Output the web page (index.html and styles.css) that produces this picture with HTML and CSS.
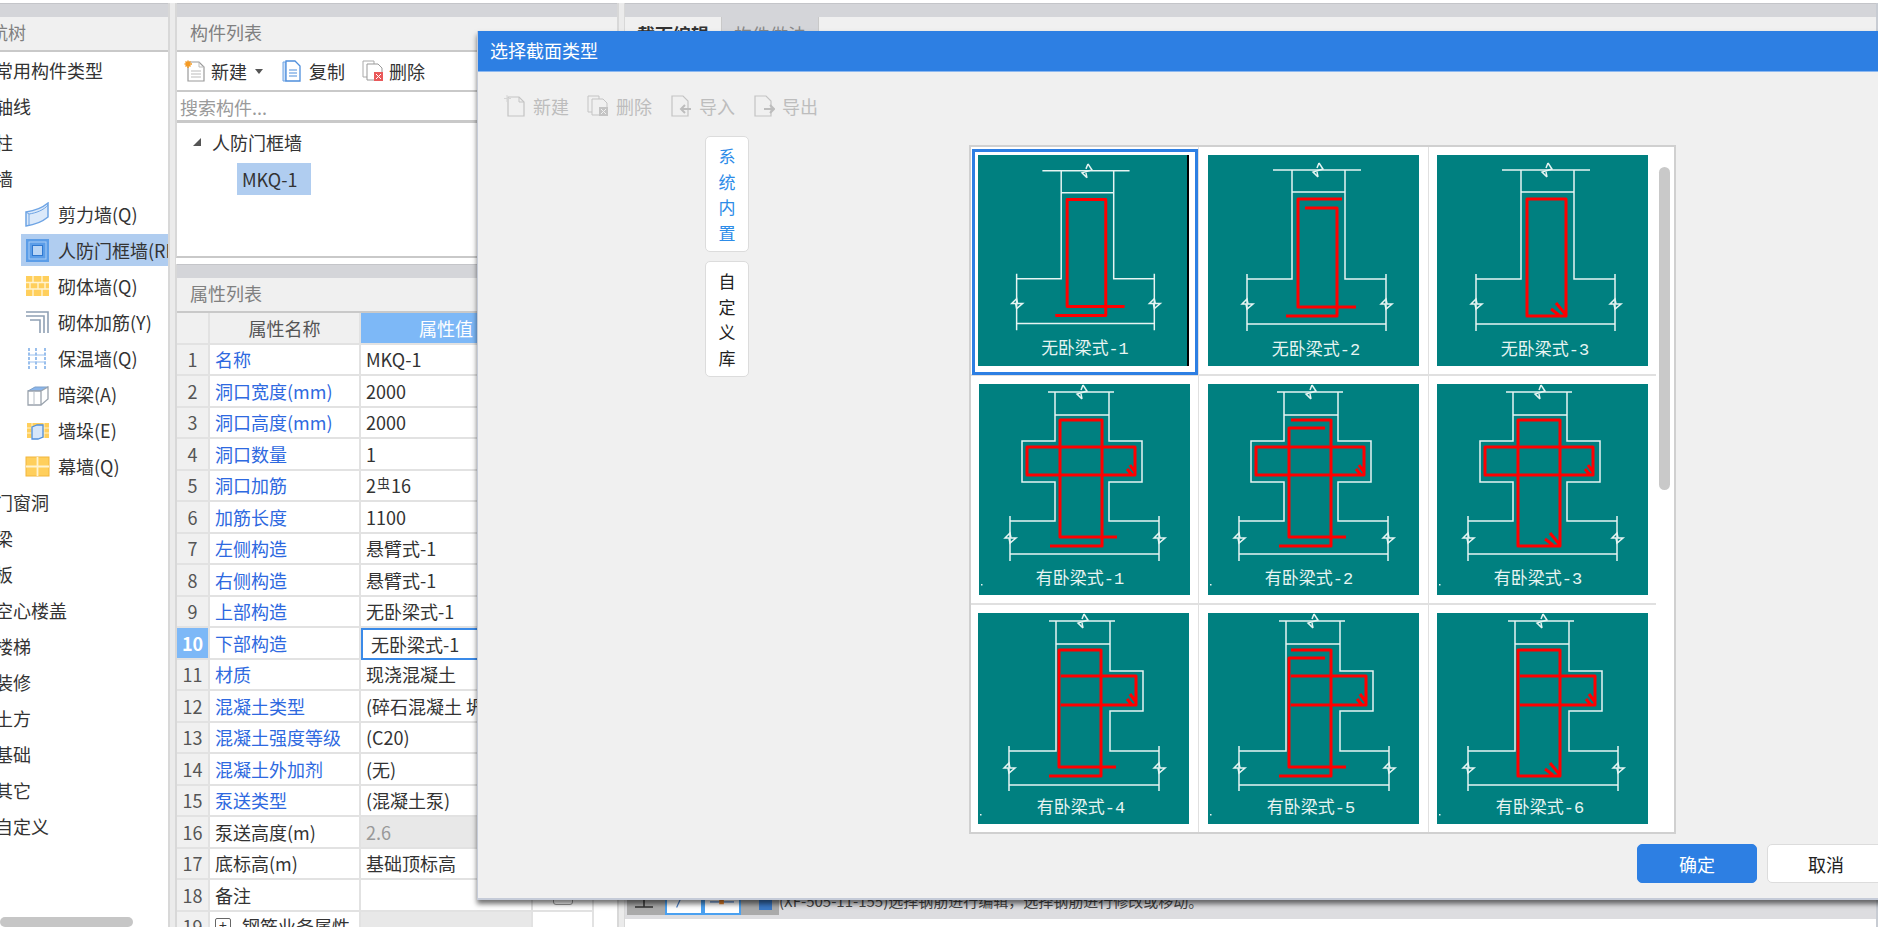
FILE: index.html
```html
<!DOCTYPE html>
<html lang="zh-CN">
<head>
<meta charset="utf-8">
<title>选择截面类型</title>
<link rel="stylesheet" href="styles.css">
</head>
<body>
<svg class="defs" width="0" height="0" aria-hidden="true">
  <defs>
    <path id="bt" d="M1 -7L5 -1L-5 2L0 7M1 -7L-1 -2M-1 2L0 7" />
    <path id="bs" d="M-5 1L0 -4L1 1H6L0 6L-1 1Z" />
    <g id="wall-none" class="line">
      <path d="M65 15H153M84 15V124H39M137 15V124H178M84 37H137M39 119V176M178 119V176M39 169H178"/>
      <use href="#bt" x="110" y="15"/><use href="#bs" x="39" y="148"/><use href="#bs" x="178" y="148"/>
    </g>
    <g id="wall-cross" class="line">
      <path d="M69 8H135M76 8V57H43V98H76V137H31M130 8V57H163V98H130V137H180M76 31H130M31 132V177M180 132V177M31 170H180"/>
      <use href="#bt" x="103" y="8"/><use href="#bs" x="31" y="153"/><use href="#bs" x="180" y="153"/>
      <rect class="dot" x="2" y="200" width="1.5" height="1.5"/>
    </g>
    <g id="wall-right" class="line">
      <path d="M71 8H137M78 8V138H31M132 8V58H165V98H132V138H181M78 31H132M31 133V178M181 133V178M31 172H181"/>
      <use href="#bt" x="105" y="8"/><use href="#bs" x="31" y="154"/><use href="#bs" x="181" y="154"/>
      <rect class="dot" x="2" y="201" width="1.5" height="1.5"/>
    </g>
    <path id="r1" class="rebar" d="M148 152H90V44H129V161H78"/>
    <path id="r2" class="rebar" d="M134 44H90V152H148M97 53H129V161H78"/>
    <path id="r3" class="rebar" d="M90 44H129V161H90ZM119 148L129 160M114 154L122 160"/>
    <path id="c1" class="rebar" d="M138 153H81V36H123V162H71"/>
    <path id="c2" class="rebar" d="M117 44H81V153H138M83 36H123V162H71"/>
    <path id="c3" class="rebar" d="M81 36H123V162H81ZM113 149L123 161M108 155L116 161"/>
    <path id="b-cross" class="rebar" d="M48 63H156V91H48ZM151 81L156 88M148 85L153 91"/>
    <path id="b-right" class="rebar" d="M83 63H158V92H83M152 81L158 89M149 86L154 92"/>
  </defs>
</svg>

<div class="app">
  <aside class="col col-nav">
    <div class="band"></div>
    <div class="panel-head"><span class="nav-title">导航树</span></div>
    <ul class="nav-tree">
      <li class="nav-top">常用构件类型</li>
      <li class="nav-top">轴线</li>
      <li class="nav-top">柱</li>
      <li class="nav-top">墙</li>
      <li class="nav-sub">
        <svg class="nav-ico" viewBox="0 0 25 25"><path d="M1 10C8 9 17 6 23 1V15C17 20 8 23 1 24Z" fill="#dbe9fa" stroke="#6ea4e4" stroke-width="1.5"/><path d="M1 10L4 12V24M4 12C11 11 19 8 23 3" fill="none" stroke="#6ea4e4"/></svg>
        <span>剪力墙(Q)</span>
      </li>
      <li class="nav-sub nav-on">
        <svg class="nav-ico" viewBox="0 0 25 25"><rect x="1" y="1" width="23" height="23" fill="#5b9de8"/><rect x="4" y="4" width="17" height="17" fill="none" stroke="#a9cdf5"/><rect x="7.5" y="7.5" width="10" height="10" fill="#b9d5f5" stroke="#2f78d0"/></svg>
        <span>人防门框墙(RFM)</span>
      </li>
      <li class="nav-sub">
        <svg class="nav-ico" viewBox="0 0 25 25"><rect x="1" y="2" width="23" height="20" fill="#ffcf5c"/><path d="M1 8.5H24M1 15H24M8 2V8.5M17 2V8.5M5 8.5V15M13 8.5V15M20 8.5V15M8 15V22M17 15V22" stroke="#fff3cf" stroke-width="1.4" fill="none"/></svg>
        <span>砌体墙(Q)</span>
      </li>
      <li class="nav-sub">
        <svg class="nav-ico" viewBox="0 0 25 25"><path d="M1 2H23V23M1 6H19V23M5 10H15V23" fill="none" stroke="#8fa0b4" stroke-width="1.6"/></svg>
        <span>砌体加筋(Y)</span>
      </li>
      <li class="nav-sub">
        <svg class="nav-ico" viewBox="0 0 25 25"><path d="M4 2V23M11 2V23M20 2V23" stroke="#6ea4e4" stroke-width="1.4" stroke-dasharray="3 1.5" fill="none"/><path d="M3 9H21M3 16H21" stroke="#9cc1ee" fill="none"/></svg>
        <span>保温墙(Q)</span>
      </li>
      <li class="nav-sub">
        <svg class="nav-ico" viewBox="0 0 25 25"><path d="M3 9L10 5H23L16 9Z" fill="#8ab6ec" stroke="#7ea0c8"/><path d="M3 9H16V23H3ZM16 9L23 5V17L16 23" fill="#fff" stroke="#9aa3ad" stroke-width="1.3"/><path d="M9 9V23" stroke="#b7bec6"/></svg>
        <span>暗梁(A)</span>
      </li>
      <li class="nav-sub">
        <svg class="nav-ico" viewBox="0 0 25 25"><rect x="2" y="5" width="22" height="15" fill="#ffcf5c"/><path d="M2 10H24M2 15H24M7 5V20M19 5V20" stroke="#fff3cf" fill="none"/><path d="M7 9L12 7H18V19L13 21H7Z" fill="#d6e6fa" stroke="#4f8fdc" stroke-width="1.3"/></svg>
        <span>墙垛(E)</span>
      </li>
      <li class="nav-sub">
        <svg class="nav-ico" viewBox="0 0 25 25"><rect x="1" y="3" width="23" height="19" fill="#ffcf5c" stroke="#f2b63c"/><path d="M1 12.5H24M12.5 3V22" stroke="#fff3cf" stroke-width="1.8" fill="none"/></svg>
        <span>幕墙(Q)</span>
      </li>
      <li class="nav-top">门窗洞</li>
      <li class="nav-top">梁</li>
      <li class="nav-top">板</li>
      <li class="nav-top">空心楼盖</li>
      <li class="nav-top">楼梯</li>
      <li class="nav-top">装修</li>
      <li class="nav-top">土方</li>
      <li class="nav-top">基础</li>
      <li class="nav-top">其它</li>
      <li class="nav-top">自定义</li>
    </ul>
    <div class="nav-scroll"></div>
  </aside>

  <div class="gutter"></div>

  <main class="col col-mid">
    <section class="list-panel">
      <div class="band"></div>
      <div class="panel-head"><span class="panel-title">构件列表</span></div>
      <div class="toolbar">
        <span class="tool tool-new">
          <svg class="tool-ico" viewBox="0 0 22 22"><path d="M4 2H15L20 7V21H4Z" fill="#fff" stroke="#9a9a9a" stroke-width="1.2"/><path d="M15 2V7H20M7 11H17M7 14H17M7 17H17" fill="none" stroke="#bbb"/><path d="M4 0.5V8M0.5 4H8M1.5 1.5L6.5 6.5M6.5 1.5L1.5 6.5" stroke="#f59a23" stroke-width="1.5"/></svg>
          新建<i class="caret"></i>
        </span>
        <span class="tool tool-copy">
          <svg class="tool-ico" viewBox="0 0 22 22"><path d="M2 2H5V21H2Z" fill="#cfe1f7" stroke="#6ea4e4"/><path d="M5 1H14L19 6V21H5Z" fill="#fff" stroke="#4f8fdc" stroke-width="1.3"/><path d="M8 10H16M8 13H16M8 16H16" stroke="#4f8fdc" fill="none"/></svg>
          复制
        </span>
        <span class="tool tool-del">
          <svg class="tool-ico" viewBox="0 0 22 22"><path d="M1 1H12V17H1Z" fill="#fff" stroke="#aaa"/><path d="M5 4H16L20 8V20H5Z" fill="#fff" stroke="#999"/><rect x="12" y="12" width="9" height="9" fill="#e9595a"/><path d="M14 14L19 19M19 14L14 19" stroke="#fff"/></svg>
          删除
        </span>
      </div>
      <div class="search">搜索构件...</div>
      <div class="list-tree">
        <div class="tree-group"><i class="tree-caret"></i>人防门框墙</div>
        <div class="tree-item">MKQ-1</div>
      </div>
    </section>

    <section class="prop-panel">
      <div class="band"></div>
      <div class="panel-head"><span class="panel-title">属性列表</span></div>
      <div class="prop-table">
        <div class="c idx"></div><div class="c hd">属性名称</div><div class="c hd hd-on">属性值</div><div class="c hd"></div>
        <div class="c idx">1</div><div class="c name">名称</div><div class="c val">MKQ-1</div><div class="c"></div>
        <div class="c idx">2</div><div class="c name">洞口宽度(mm)</div><div class="c val">2000</div><div class="c"></div>
        <div class="c idx">3</div><div class="c name">洞口高度(mm)</div><div class="c val">2000</div><div class="c"></div>
        <div class="c idx">4</div><div class="c name">洞口数量</div><div class="c val">1</div><div class="c"></div>
        <div class="c idx">5</div><div class="c name">洞口加筋</div><div class="c val">2<span class="steel">虫</span>16</div><div class="c"></div>
        <div class="c idx">6</div><div class="c name">加筋长度</div><div class="c val">1100</div><div class="c"></div>
        <div class="c idx">7</div><div class="c name">左侧构造</div><div class="c val">悬臂式-1</div><div class="c"></div>
        <div class="c idx">8</div><div class="c name">右侧构造</div><div class="c val">悬臂式-1</div><div class="c"></div>
        <div class="c idx">9</div><div class="c name">上部构造</div><div class="c val">无卧梁式-1</div><div class="c"></div>
        <div class="c idx idx-on">10</div><div class="c name">下部构造</div><div class="c val val-edit">无卧梁式-1</div><div class="c"></div>
        <div class="c idx">11</div><div class="c name">材质</div><div class="c val">现浇混凝土</div><div class="c"></div>
        <div class="c idx">12</div><div class="c name">混凝土类型</div><div class="c val">(碎石混凝土 坍落度)</div><div class="c"></div>
        <div class="c idx">13</div><div class="c name">混凝土强度等级</div><div class="c val">(C20)</div><div class="c"></div>
        <div class="c idx">14</div><div class="c name">混凝土外加剂</div><div class="c val">(无)</div><div class="c"></div>
        <div class="c idx">15</div><div class="c name">泵送类型</div><div class="c val">(混凝土泵)</div><div class="c"></div>
        <div class="c idx">16</div><div class="c name name-plain">泵送高度(m)</div><div class="c val val-off">2.6</div><div class="c"></div>
        <div class="c idx">17</div><div class="c name name-plain">底标高(m)</div><div class="c val">基础顶标高</div><div class="c"></div>
        <div class="c idx">18</div><div class="c name name-plain">备注</div><div class="c val"></div><div class="c c-check"><i class="check"></i></div>
        <div class="c idx">19</div><div class="c name name-plain"><i class="plus">+</i>钢筋业务属性</div><div class="c val val-off"></div><div class="c"></div>
      </div>
    </section>
  </main>

  <div class="gutter gutter-r"></div>

  <section class="col col-right">
    <div class="band"></div>
    <div class="tabs">
      <span class="tab tab-on">截面编辑</span>
      <span class="tab">构件做法</span>
    </div>
    <div class="canvas"></div>
    <div class="edit-bar">
      <div class="edit-tools">
        <span class="edit-btn"><svg class="edit-ico" viewBox="0 0 38 26"><path d="M8 18H26M17 10V18" fill="none" stroke="#333" stroke-width="1.5"/></svg></span>
        <span class="edit-btn edit-btn-on"><svg class="edit-ico" viewBox="0 0 34 26"><path d="M9 20L14 9" fill="none" stroke="#4a7fc8" stroke-width="1.3"/></svg></span>
        <span class="edit-btn edit-btn-on"><svg class="edit-ico" viewBox="0 0 34 26"><path d="M4 14H30" fill="none" stroke="#4a7fc8" stroke-width="1.3"/><rect x="14" y="11.500" width="5" height="5" fill="#e8822a"/></svg></span>
        <span class="edit-btn"><svg class="edit-ico" viewBox="0 0 38 26"><rect x="18" y="10" width="13" height="11" fill="#3b78c4"/></svg></span>
      </div>
      <span class="edit-note">(XF-505-11-155)选择钢筋进行编辑，选择钢筋进行修改或移动。</span>
    </div>
  </section>
</div>

<div class="dialog">
  <header class="dlg-title">选择截面类型</header>
  <div class="dlg-tools">
    <span class="dlg-tool">
      <svg class="tool-ico" viewBox="0 0 22 22"><path d="M4 2H15L20 7V21H4Z" fill="none" stroke="#c4c4c4" stroke-width="1.2"/><path d="M15 2V7H20" fill="none" stroke="#c4c4c4"/><path d="M3 0V7M0 3.500H7" stroke="#d5d5d5"/></svg>新建
    </span>
    <span class="dlg-tool">
      <svg class="tool-ico" viewBox="0 0 22 22"><path d="M1 1H12V17H1Z" fill="none" stroke="#c4c4c4"/><path d="M5 4H16L20 8V20H5Z" fill="#f0f0f0" stroke="#c4c4c4"/><rect x="12" y="12" width="9" height="9" fill="#c4c4c4"/><path d="M14 14L19 19M19 14L14 19" stroke="#f0f0f0"/></svg>删除
    </span>
    <span class="dlg-tool">
      <svg class="tool-ico" viewBox="0 0 22 22"><path d="M2 1H13L18 6V21H2Z" fill="none" stroke="#c4c4c4" stroke-width="1.2"/><path d="M21 14H11M15 10L11 14L15 18" fill="none" stroke="#bdbdbd" stroke-width="2"/></svg>导入
    </span>
    <span class="dlg-tool">
      <svg class="tool-ico" viewBox="0 0 22 22"><path d="M2 1H13L18 6V21H2Z" fill="none" stroke="#c4c4c4" stroke-width="1.2"/><path d="M11 14H21M17 10L21 14L17 18" fill="none" stroke="#bdbdbd" stroke-width="2"/></svg>导出
    </span>
  </div>
  <div class="dlg-main">
    <div class="side-tabs">
      <div class="side-tab side-tab-on">系<br>统<br>内<br>置</div>
      <div class="side-tab">自<br>定<br>义<br>库</div>
    </div>
    <div class="gallery">
      <div class="cards">
        <div class="cell cell-sel">
          <svg class="card card-first" viewBox="0 0 211 211"><use href="#wall-none"/><use href="#r1"/><text class="label" x="108" y="200">无卧梁式-1</text></svg>
        </div>
        <div class="cell">
          <svg class="card" viewBox="0 0 211 211"><use href="#wall-none"/><use href="#r2"/><text class="label" x="108" y="200">无卧梁式-2</text></svg>
        </div>
        <div class="cell">
          <svg class="card" viewBox="0 0 211 211"><use href="#wall-none"/><use href="#r3"/><text class="label" x="108" y="200">无卧梁式-3</text></svg>
        </div>
        <div class="cell">
          <svg class="card" viewBox="0 0 211 211"><use href="#wall-cross"/><use href="#c1"/><use href="#b-cross"/><text class="label" x="101" y="200">有卧梁式-1</text></svg>
        </div>
        <div class="cell">
          <svg class="card" viewBox="0 0 211 211"><use href="#wall-cross"/><use href="#c2"/><use href="#b-cross"/><text class="label" x="101" y="200">有卧梁式-2</text></svg>
        </div>
        <div class="cell">
          <svg class="card" viewBox="0 0 211 211"><use href="#wall-cross"/><use href="#c3"/><use href="#b-cross"/><text class="label" x="101" y="200">有卧梁式-3</text></svg>
        </div>
        <div class="cell cell-pull">
          <svg class="card" viewBox="0 0 211 211"><use href="#wall-right"/><use href="#c1" y="1"/><use href="#b-right"/><text class="label" x="103" y="200">有卧梁式-4</text></svg>
        </div>
        <div class="cell">
          <svg class="card" viewBox="0 0 211 211"><use href="#wall-right"/><use href="#c2" y="1"/><use href="#b-right"/><text class="label" x="103" y="200">有卧梁式-5</text></svg>
        </div>
        <div class="cell">
          <svg class="card" viewBox="0 0 211 211"><use href="#wall-right"/><use href="#c3" y="1"/><use href="#b-right"/><text class="label" x="103" y="200">有卧梁式-6</text></svg>
        </div>
      </div>
      <div class="gallery-scroll"><div class="gallery-thumb"></div></div>
    </div>
  </div>
  <div class="dlg-actions">
    <button class="btn btn-primary" type="button">确定</button>
    <button class="btn" type="button">取消</button>
  </div>
</div>
</body>
</html>
```

FILE: styles.css
```css
* { box-sizing: border-box; }
html, body { margin: 0; padding: 0; height: 100%; overflow: hidden; background: #fff; }
body { font-family: "Noto Sans CJK SC", "Noto Sans", sans-serif; font-size: 18px; color: #333; }
ul { list-style: none; margin: 0; padding: 0; }
i { font-style: normal; }
.defs { display: block; height: 0; }

.app { display: flex; width: 1878px; height: 927px; padding-top: 2px; overflow: hidden; border-top: 1px solid #fff; }
.col { display: flex; flex-direction: column; height: 100%; overflow: hidden; }
.col-nav { width: 168px; position: relative; }
.col-mid { width: 441px; }
.col-right { flex: 1; border-right: 2px solid #c8ccd3; }
.gutter { width: 8px; background: #ebebeb; border-left: 2px solid #d8d8d8; border-right: 1px solid #d8d8d8; }

.band { flex: none; height: 14px; background: #d4d5d9; border-top: 1px solid #c4c5c9; }
.panel-head { flex: none; height: 35px; background: #f0f0f0; border-bottom: 2px solid #c9c9c9; line-height: 31px; overflow: hidden; white-space: nowrap; }
.panel-title { margin-left: 13px; color: #808080; }
.nav-title { margin-left: -28px; color: #808080; }

.nav-tree { flex: 1; }
.nav-tree li { height: 36px; display: flex; align-items: center; white-space: nowrap; overflow: hidden; }
.nav-top { padding-left: 0; text-indent: -5px; }
.nav-sub { padding-left: 25px; }
.nav-sub span { margin-left: 8px; }
.nav-on { background: #b0cdf0; margin-left: 21px; padding-left: 4px; height: 32px !important; margin-top: 2px; margin-bottom: 2px; }
.nav-ico { width: 25px; height: 25px; flex: none; }
.nav-scroll { flex: none; width: 133px; height: 10px; background: #c6c6c6; border-radius: 5px; }

.list-panel { flex: none; height: 255px; display: flex; flex-direction: column; border-bottom: 2px solid #c9c9c9; border-left: 1px solid #d8d8d8; }
.toolbar { flex: none; height: 40px; display: flex; align-items: center; padding-left: 7px; border-bottom: 2px solid #c9c9c9; }
.tool { display: inline-flex; align-items: center; gap: 5px; }
.tool-new { width: 97px; }
.tool-copy { width: 81px; gap: 6px; }
.tool-ico { width: 22px; height: 22px; flex: none; }
.caret { width: 0; height: 0; margin-left: 3px; border: 4px solid transparent; border-top: 5px solid #555; border-bottom: 0; }
.search { flex: none; height: 31px; padding-left: 3px; line-height: 30px; color: #9a9a9a; border-bottom: 3px solid #c9c9c9; }
.list-tree { flex: 1; padding-top: 1px; }
.tree-group { height: 36px; display: flex; align-items: center; padding-left: 16px; }
.tree-caret { width: 0; height: 0; margin-right: 11px; border-left: 8px solid transparent; border-bottom: 8px solid #555; }
.tree-item { width: 74px; height: 32px; margin-left: 60px; margin-top: 3px; padding-left: 5px; line-height: 32px; background: #b0cdf0; }

.prop-panel { flex: 1; margin-top: 6px; border-left: 1px solid #d8d8d8; display: flex; flex-direction: column; }
.prop-table { display: grid; grid-template-columns: 33px 151px 172px 61px; grid-auto-rows: 31.5px; }
.c { border-right: 2px solid #e2e2e2; border-bottom: 2px solid #e2e2e2; display: flex; align-items: center; white-space: nowrap; overflow: hidden; line-height: 1; }
.idx { background: #f0f0f0; justify-content: center; color: #555; }
.idx-on { background: #7db8f7; color: #fff; font-weight: 700; }
.hd { background: #f0f0f0; justify-content: center; color: #555; }
.hd-on { background: #7db8f7; color: #fff; }
.name { color: #2e69e0; padding-left: 5px; }
.name-plain { color: #333; }
.val { padding-left: 5px; color: #333; }
.val-off { background: #e8e8e8; color: #999; }
.val-edit { border: 2px solid #3a8ae8; padding-left: 8px; }
.steel { font-size: 13px; margin: -6px 1px 0; }
.plus { width: 16px; height: 16px; margin: 0 11px 0 0; border: 1px solid #666; border-radius: 2px; font-size: 14px; line-height: 13px; text-align: center; flex: none; }
.c-check { justify-content: center; }
.check { width: 20px; height: 20px; border: 1px solid #999; border-radius: 3px; background: #fff; }

.tabs { flex: none; height: 33px; display: flex; background: #f0f0f0; }
.tab { width: 97px; height: 100%; text-align: center; line-height: 34px; color: #888; background: #d4d5d9; border-right: 1px solid #c9c9c9; }
.tab-on { background: #f0f0f0; color: #333; font-weight: 700; }
.canvas { flex: 1; }
.edit-bar { flex: none; height: 38px; display: flex; align-items: flex-start; background: linear-gradient(#dddde0 30px, #fff 30px); }
.edit-tools { display: flex; height: 26px; margin-left: 2px; flex: none; background: #aaa; }
.edit-btn { width: 38px; height: 26px; display: block; }
.edit-ico { display: block; width: 100%; height: 100%; }
.edit-btn-on { background: #fff; border: 2px solid #4aa0f0; border-top: 0; }
.edit-note { font-size: 15px; line-height: 17px; color: #444; margin-top: 3px; white-space: nowrap; }

.dialog { position: absolute; left: 477px; top: 31px; width: 1408px; height: 869px; display: flex; flex-direction: column; background: #f0f0f0; border-left: 1px solid #c5cbd8; border-bottom: 2px solid #c5cbd8; box-shadow: 0 4px 5px rgba(0,0,0,.55); }
.dlg-title { flex: none; height: 41px; padding-left: 12px; line-height: 39px; color: #fff; background: #2d7fe3; border-bottom: 1px solid #8cb8f0; }
.dlg-tools { flex: none; height: 64px; display: flex; align-items: flex-start; padding: 18px 0 0 26px; }
.dlg-tool { display: inline-flex; align-items: center; gap: 7px; width: 83px; height: 32px; color: #bdbdbd; white-space: nowrap; }
.dlg-main { flex: none; display: flex; align-items: flex-start; margin-left: 227px; }
.side-tabs { width: 44px; display: flex; flex-direction: column; gap: 9px; margin-right: 220px; }
.side-tab { height: 116px; padding-top: 6px; background: #fff; border: 1px solid #dcdcdc; border-radius: 5px; text-align: center; line-height: 25.6px; color: #222; font-size: 17px; }
.side-tab-on { color: #2d8ce8; }
.gallery { width: 707px; height: 689px; margin-top: 9px; display: flex; background: #fff; border: 2px solid #d0d0d0; }
.cards { display: grid; grid-template-columns: 228px 230px 227px; grid-template-rows: 229px 229px 227px; }
.cell { position: relative; display: flex; align-items: center; justify-content: center; border-right: 1px solid #e0e0e0; border-bottom: 2px solid #e0e0e0; }
.cell:nth-child(3n) { border-right: 0; }
.cell:nth-child(n+7) { border-bottom: 0; }
.cell-sel, .cell-pull { padding-right: 2px; }
.cell-sel::after { content: ""; position: absolute; inset: 2px 0 -1px 1px; border: 3px solid #2d7fe3; }
.card { width: 211px; height: 211px; flex: none; background: #008080; }
.card-first { border-right: 2px solid #000; }
.line path, .line use { fill: none; stroke: #e6f4f2; stroke-width: 1.5; }
.line .dot { fill: #e6f4f2; stroke: none; }
.rebar { fill: none; stroke: #f00; stroke-width: 3; stroke-linejoin: round; }
.label { fill: #e6f4f2; font-family: "Liberation Mono", "Noto Sans CJK SC", monospace; font-size: 17px; text-anchor: middle; }
.gallery-scroll { flex: 1; padding: 20px 5px 0 3px; }
.gallery-thumb { width: 11px; height: 323px; border-radius: 6px; background: #c9c9c9; }
.dlg-actions { flex: none; display: flex; justify-content: flex-end; gap: 10px; margin-top: 10px; }
.btn { width: 118px; height: 39px; padding: 0; font: inherit; color: #222; background: #fff; border: 1px solid #dcdcdc; border-radius: 5px; }
.btn-primary { width: 120px; color: #fff; background: #2d7fe3; border-color: #2d7fe3; }
```
